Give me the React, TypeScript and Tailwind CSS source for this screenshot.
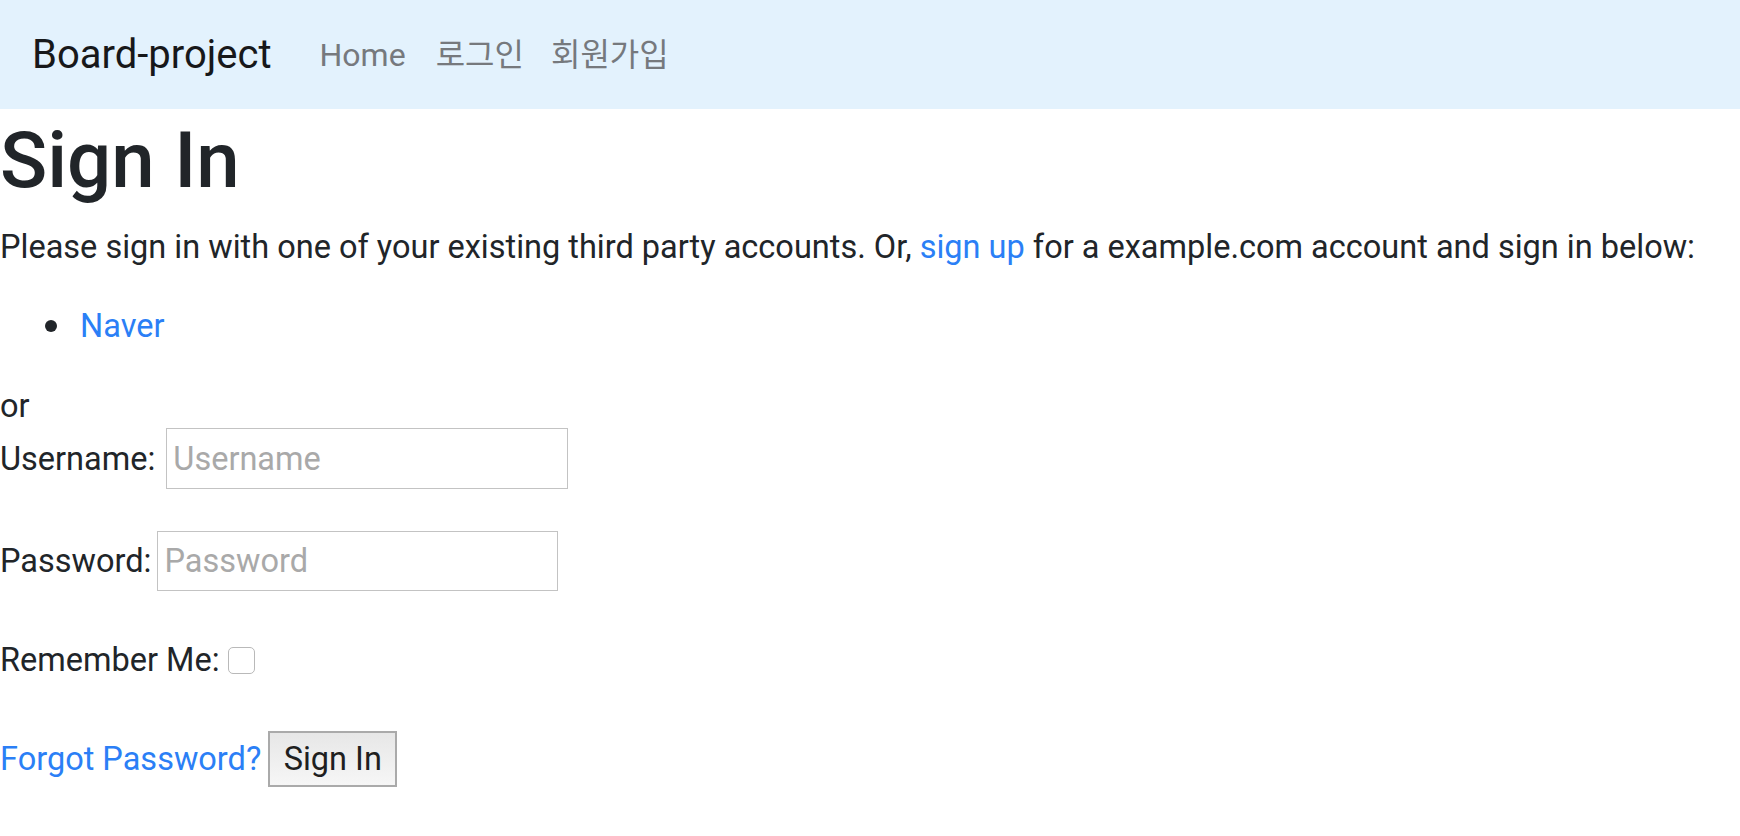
import React from "react";

const font = "font-['Roboto','Noto_Sans_CJK_KR',sans-serif]";

export default function App() {
  return (
    <div className={`min-h-screen bg-white text-[#212529] ${font}`}>
      <nav className="flex h-[109px] items-center bg-[#e3f2fd] px-[32px]">
        <a href="#" className="mr-[32px] text-[40px] leading-[56px] text-[#17181a]">
          Board-project
        </a>
        <ul className="flex text-[32px] leading-[48px] text-[#76797d]">
          <li>
            <a href="#" className="block px-[16px]">Home</a>
          </li>
          <li>
            <a href="#" className="block px-[14px]">로그인</a>
          </li>
          <li>
            <a href="#" className="block px-[13px]">회원가입</a>
          </li>
        </ul>
      </nav>

      <main className="text-[32.5px] leading-[48px]">
        <h1 className="mb-[14px] pt-[4px] text-[78px] font-medium leading-[96px]">Sign In</h1>
        <p className="mb-[31px] whitespace-nowrap">
          Please sign in with one of your existing third party accounts. Or,{" "}
          <a href="#" className="text-[#2b7ff6]">sign up</a> for a example.com account and sign in below:
        </p>

        <ul className="mb-[32px] pl-[45px]">
          <li className="flex items-center">
            <span className="mr-[23px] inline-block h-[12px] w-[12px] rounded-full bg-[#212529]" />
            <a href="#" className="text-[#2b7ff6]">Naver</a>
          </li>
        </ul>

        <div className="h-[46px]">or</div>

        <form>
          <div className="flex h-[61px] items-center">
            <label htmlFor="id_login">Username:</label>
            <input
              id="id_login"
              type="text"
              placeholder="Username"
              className="ml-[11px] h-[61px] w-[402px] border border-[#c3c3c3] px-[6px] text-[32.5px] outline-none placeholder:text-[#a9a9a9]"
            />
          </div>

          <div className="mt-[42px] flex h-[60px] items-center">
            <label htmlFor="id_password">Password:</label>
            <input
              id="id_password"
              type="password"
              placeholder="Password"
              className="ml-[6px] h-[60px] w-[401px] border border-[#c3c3c3] px-[6px] text-[32.5px] outline-none placeholder:text-[#a9a9a9]"
            />
          </div>

          <div className="mt-[42px] flex h-[54px] items-center">
            <label htmlFor="id_remember">Remember Me:</label>
            <span
              id="id_remember"
              className="ml-[8px] inline-block h-[27px] w-[27px] rounded-[5px] border border-[#b9b9b9] bg-white"
            />
          </div>

          <div className="mt-[44px] flex h-[56px] items-center">
            <a href="#" className="text-[#2b7ff6]">Forgot Password?</a>
            <button
              type="submit"
              className="ml-[7px] h-[56px] w-[129px] border-2 border-[#aaaaaa] bg-gradient-to-b from-[#e7e7e7] to-[#f6f6f6] text-[32.5px] leading-none text-[#1f1f1f]"
            >
              Sign In
            </button>
          </div>
        </form>
      </main>
    </div>
  );
}
